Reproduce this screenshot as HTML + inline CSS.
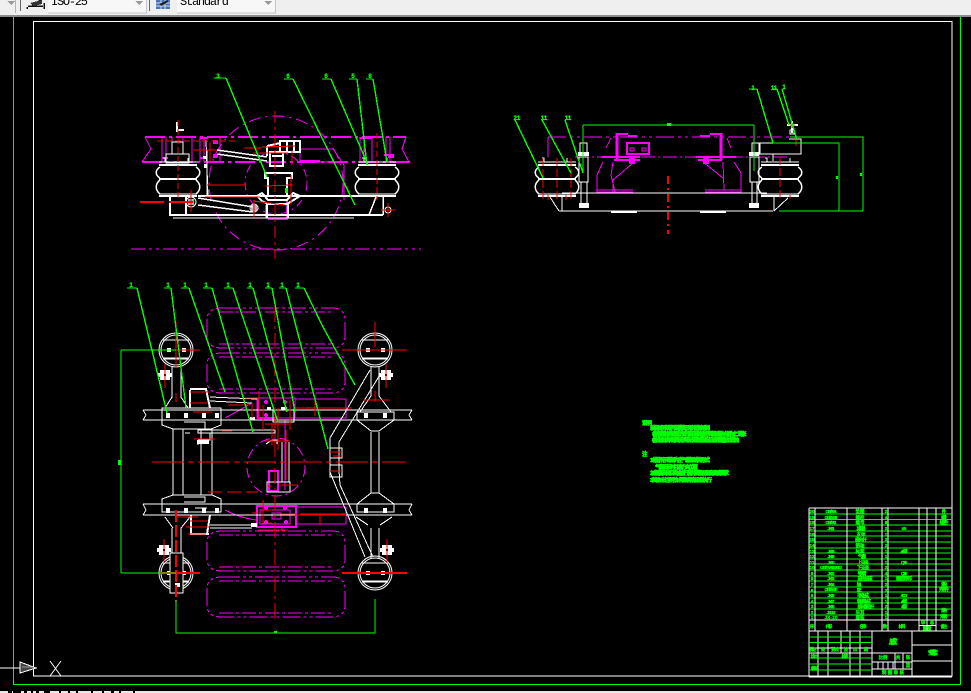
<!DOCTYPE html>
<html lang="zh">
<head>
<meta charset="utf-8">
<title>CAD</title>
<style>
html,body{margin:0;padding:0;background:#000;width:971px;height:693px;overflow:hidden}
svg{display:block;position:absolute;left:0;top:0}
.w{stroke:#fff;fill:none;stroke-width:1}
.m{stroke:#f0f;fill:none;stroke-width:1}
.r{stroke:#f00;fill:none;stroke-width:1}
.g{stroke:#0f0;fill:none;stroke-width:1}
.d{stroke:#0f0;fill:none;stroke-width:1.400}
.t{fill:#0f0;stroke:#0f0;stroke-width:.6;font-family:"Liberation Sans","Noto Sans CJK SC",sans-serif;font-size:5.5px;font-weight:bold}
.n{fill:#0f0;stroke:#0f0;stroke-width:.3;font-family:"Liberation Sans",sans-serif;font-size:6px;font-weight:bold;text-anchor:middle}
.c{fill:#0f0;stroke:#0f0;stroke-width:.3;font-family:"Liberation Sans","Noto Sans CJK SC",sans-serif;font-size:4.500px;font-weight:bold;text-anchor:middle}
.b{font-family:"Liberation Mono",monospace;font-size:12px;fill:#000}
</style>
</head>
<body>
<svg width="971" height="693" viewBox="0 0 971 693" xmlns="http://www.w3.org/2000/svg" shape-rendering="crispEdges">
<defs>
<g id="sp">
<path class="w" style="stroke-width:2" d="M-19 -14H19M-19 17H19M-19 0H19"/>
<path class="w" style="stroke-width:1.500" shape-rendering="auto" d="M-18 -12C-23 -9 -23 -4 -18 -1M18 -12C23 -9 23 -4 18 -1M-18 1C-23 5 -23 11 -18 15M18 1C23 5 23 11 18 15"/>
<path class="w" d="M-19 -17H19M-19 15H19M-15 -21H-13V-17M10 -21V-17"/>
</g>
<g id="wh">
<circle class="w" r="17" shape-rendering="auto"/>
<circle class="w" r="15" shape-rendering="auto"/>
<path class="w" d="M-13 -10H13M-13 8H13M-13 9H13"/>
<rect x="-9" y="-2" width="4" height="4" fill="#fff"/>
<rect x="6" y="-2" width="4" height="4" fill="#fff"/>
</g>
<g id="bag">
<path class="m" stroke-dasharray="18 3 3 3 3 3" d="M15 0H125Q138 0 138 12V28Q138 40 125 40H15Q0 40 0 28V12Q0 0 15 0Z"/>
<path class="m" stroke-dasharray="14 3 3 3" d="M12 4H126M12 36H126"/>
</g>
<g id="cal">
<rect x="-5" y="-5" width="10" height="10" fill="#fff"/>
<rect x="-7" y="-2" width="14" height="4" fill="#fff"/>
<rect x="-1" y="-1" width="2" height="2" fill="#000"/>
<path class="r" d="M0 -11V13"/>
</g>
</defs>

<rect width="971" height="693" fill="#000"/>

<!-- toolbar -->
<rect width="971" height="15" fill="#efefef"/>
<rect y="15" width="971" height="2" fill="#8c8c8c"/>
<path d="M7 1H15L11 5Z" fill="#999"/>
<rect x="15" y="0" width="1" height="13" fill="#b5b5b5"/>
<rect x="20" y="0" width="1" height="11" fill="#666"/>
<rect x="48" y="0" width="98" height="13" fill="#f7f7f7"/>
<path d="M146.500 0V13H48" fill="none" stroke="#c4c4c4"/>
<rect x="149" y="0" width="1" height="11" fill="#666"/>
<rect x="177" y="0" width="98" height="13" fill="#f7f7f7"/>
<path d="M275.500 0V13H177" fill="none" stroke="#c4c4c4"/>
<path d="M135 1H143L139 5ZM264 1H272L268 5Z" fill="#999"/>
<path d="M27 7V9M44 3V9M28 6H43M32 5L41 0" stroke="#111" stroke-width="1.500" fill="none"/>
<path d="M30 3L42 0V4L34 6Z" fill="#333"/>
<rect x="156" y="0" width="14" height="9" fill="#4a74b8"/>
<path d="M156 3H170M156 6H170M161 0V9M165 0V9" stroke="#c8d8f0" fill="none"/>
<path d="M159 4L168 0V2L161 6Z" fill="#222"/>
<text class="b" x="51" y="5" textLength="37">ISO-25</text>
<text class="b" x="180" y="5" textLength="49">Standard</text>

<!-- bottom strip -->
<rect y="691" width="971" height="2" fill="#e8e8e8"/>
<g fill="#000"><rect x="8" y="691" width="4" height="2"/><rect x="13" y="691" width="8" height="2"/><rect x="24" y="691" width="3" height="2"/><rect x="31" y="691" width="2" height="2"/><rect x="36" y="691" width="3" height="2"/><rect x="44" y="691" width="6" height="2"/><rect x="59" y="691" width="2" height="2"/><rect x="68" y="691" width="2" height="2"/><rect x="76" y="691" width="2" height="2"/><rect x="91" y="691" width="2" height="2"/><rect x="102" y="691" width="2" height="2"/><rect x="111" y="691" width="3" height="2"/><rect x="119" y="691" width="2" height="2"/><rect x="133" y="691" width="2" height="2"/></g>

<!-- frames -->
<path d="M13.500 17V684.500H960.500V17" fill="none" stroke="#0f0"/>
<rect x="33.500" y="21.500" width="918.500" height="654.500" fill="none" stroke="#fff"/>

<!-- UCS -->
<path d="M0 668H20" stroke="#fff" fill="none"/>
<path d="M20 662L36 668L20 673Z" fill="#444" stroke="#fff"/>
<path d="M22 667H33" stroke="#999"/>
<path d="M50 676L61 661M50 661L61 676" stroke="#fff" fill="none" shape-rendering="auto"/>

<!-- ============ top-left view ============ -->
<g>
<path class="m" stroke-dasharray="14 4 3 4 3 4" d="M131 249H421"/>
<circle class="m" cx="276" cy="183" r="67" stroke-dasharray="12 5 2 5" shape-rendering="auto"/>
<circle class="m" cx="276" cy="183" r="31" stroke-dasharray="8 4 2 4" shape-rendering="auto"/>
<path class="m" style="stroke-width:2" stroke-dasharray="20 4 3 4" d="M145 137H406M142 162H410"/>
<path class="m" d="M145 137L151 149L142 162M406 137L402 149L409 162"/>
<path class="m" d="M162 137V162M166 137V162M172 137V142M183 137V142M192 137V162M200 137V162M204 137V162M220 137V162M360 137V162M364 137V162M372 137V162M386 137V162M390 137V162M300 149H333M300 150V162M333 149L344 165L344 200M339 162H300"/>
<path class="m" style="stroke-width:2" d="M162 158H168M200 138H208M200 158H206M360 138H372M384 155H392M268 219H288M287 200V218M266 205V218M300 161H320"/>
<rect x="388" y="154" width="6" height="4" fill="#f0f"/>
<rect x="213" y="140" width="5" height="4" fill="#f0f"/>
<rect x="213" y="154" width="5" height="4" fill="#f0f"/>

<use href="#sp" x="178" y="179"/>
<use href="#sp" x="377" y="179"/>
<path class="w" d="M166 154H189V163H166ZM172 142H183V154H172Z"/>
<path class="w" style="stroke-width:2" d="M177 122V132M177 130H184M198 196H377M170 197V215M186 197V215M169 215H383"/>
<path class="w" d="M173 218H354M206 140L208 196M207 150V196"/>
<path class="w" style="stroke-width:1.500" d="M217 150L267 157M217 154L267 161M198 198L253 207M198 205L253 212M376 197L369 215M383 197V215"/>
<path class="w" style="stroke-width:2" d="M270 152H283V166H270ZM280 141H300V152H280ZM287 141V152M294 141V152M267 146L280 143M267 146V156M265 173H292V178H287V196H268V178H265ZM257 196L262 193L268 200H287L293 193L300 196L292 201L287 204H268L262 201ZM267 204V218M288 204V218M272 156H282"/>
<circle class="w" cx="254" cy="208" r="4" shape-rendering="auto"/>
<circle class="w" cx="191" cy="202" r="5" shape-rendering="auto"/>
<circle class="w" cx="388" cy="210" r="3" shape-rendering="auto"/>
<rect x="251" y="205" width="6" height="6" fill="#fff" opacity=".7"/>
<rect x="188" y="199" width="6" height="6" fill="#fff" opacity=".7"/>
<rect x="203" y="156" width="4" height="3" fill="#fff"/>
<rect x="204" y="164" width="3" height="4" fill="#fff"/>

<path class="r" stroke-dasharray="12 4 3 4" d="M275 111V259"/>
<path class="r" stroke-dasharray="6 3" d="M178 120V200M377 133V200M157 141H236"/>
<path class="r" style="stroke-width:2" stroke-dasharray="24 5" d="M140 202H198"/>
<path class="r" d="M194 150H217M207 185H245M262 147L295 146M253 153H288M265 186L293 185M253 201L285 205M205 197H260M381 210H395M388 203V217M191 190V212M254 200V217M292 150V165M291 175V205M210 142V162M244 148H261"/>
<path class="d" d="M226 78L267 177M293 79L355 205M331 79L368 165M357 79L367 165M373 79L387 162"/>
<path class="g" d="M214 78H226M284 79H293M322 79H331M349 79H357M366 79H373"/>
<rect x="285" y="188" width="3" height="5" fill="#0f0"/>
<text class="n" x="218" y="78">3</text><text class="n" x="288" y="78">6</text><text class="n" x="326" y="78">6</text><text class="n" x="353" y="78">5</text><text class="n" x="370" y="78">8</text>
</g>

<!-- ============ top-right view ============ -->
<g>
<path class="m" stroke-dasharray="18 4 3 4 3 4" d="M548 137H790"/>
<path class="m" stroke-dasharray="14 3 2 3" d="M575 157H790"/>
<path class="m" d="M548 137V157"/>
<path class="m" style="stroke-width:3" d="M617 133V160M721 133V160"/>
<path class="m" style="stroke-width:2" d="M616 134H628M710 134H722M602 157H640M696 157H736M614 160H640M698 160H722M628 136H637M700 136H710"/>
<rect class="m" x="627" y="143" width="22" height="11" style="stroke-width:2"/>
<path class="m" d="M630 148h4v3h-4zM642 148h4v3h-4z"/>
<path class="m" d="M603 162L597 175V192H615M611 138L606 148M613 162L611 175L615 192H633M633 163L613 180V192M734 162L741 173V192H705M727 138L731 148M723 162L724 190M703 162L723 178M597 190H633M705 190H741"/>
<rect x="629" y="157" width="6" height="7" fill="#f0f"/>
<rect x="703" y="157" width="6" height="7" fill="#f0f"/>

<use href="#sp" x="557" y="179"/>
<use href="#sp" x="780" y="179"/>
<path class="w" d="M559 211H773M562 193H767M562 197V211M550 197L559 211M774 197V211M774 211L788 198"/>
<path class="w" style="stroke-width:2" d="M611 212H637M700 212H726"/>
<path class="w" d="M579 157H588V182H579ZM581 182V203M587 182V203M580 143H587V155H580ZM750 157H759V182H750ZM752 182V203M757 182V203M752 143H759V155H752ZM760 143H801V154H760ZM789 139H801V143M773 154V161"/>
<rect x="578" y="152" width="11" height="4" fill="#fff"/>
<rect x="749" y="152" width="10" height="4" fill="#fff"/>
<rect x="579" y="203" width="10" height="5" fill="#fff"/>
<rect x="749" y="203" width="10" height="5" fill="#fff"/>
<path class="w" style="stroke-width:2" d="M787 125H798M792 121V133"/>
<rect x="790" y="130" width="4" height="4" fill="none" stroke="#fff"/>
<path class="r" style="stroke-width:2" stroke-dasharray="8 4 2 4" d="M668 176V234"/>
<path class="r" stroke-dasharray="8 3" d="M543 158V202M557 158V202M571 158V202M780 157V200"/>
<path class="r" d="M796 140V146M790 125H795M792 122V128M548 195V200M566 195V200M790 195V199"/>
<path class="g" d="M583 125H754M583 125V173M754 125V171M790 137H863V211M773 143H839V211M779 211H863M749 89H757M772 89H777"/>
<path class="d" d="M515 120L543 178M542 120L571 173M565 120L583 173M757 89L773 143M777 89L789 125M782 89L797 140"/>
<rect x="667" y="123" width="4" height="3" fill="#0f0"/>
<rect x="860" y="173" width="2" height="3" fill="#0f0"/>
<rect x="836" y="176" width="2" height="3" fill="#0f0"/>
<text class="n" x="517" y="120">21</text><text class="n" x="544" y="120">11</text><text class="n" x="568" y="120">11</text><text class="n" x="753" y="90">1</text><text class="n" x="774" y="90">11</text><text class="n" x="784" y="89">1</text>
</g>

<!-- ============ plan view ============ -->
<g>
<use href="#bag" x="207" y="308"/>
<use href="#bag" x="207" y="353"/>
<use href="#bag" x="207" y="531"/>
<use href="#bag" x="207" y="577"/>
<circle class="m" cx="276" cy="467" r="29" stroke-dasharray="10 4 2 4" shape-rendering="auto"/>
<path class="m" d="M257 398H295V418H257ZM295 399H346V418H295ZM225 418Q240 410 252 403M225 510Q240 518 256 520"/>
<path class="m" style="stroke-width:2" d="M257 506H296V527H257ZM269 471H278V491H269Z"/>
<path class="m" d="M296 507H346V524H296ZM260 510H290V524H260ZM272 513H281V519H272ZM258 527H282V531M285 420V490"/>
<path class="m" style="stroke-width:2" d="M258 398V418H275"/>

<path class="w" d="M143 410H412M143 420H412M143 504H412M143 515H412M143 410L146 415L143 420M412 410L409 415L412 420M143 504L146 510L143 515M412 504L409 510L412 515"/>
<path class="w" d="M162 408H221V425L211 429H173L162 425ZM173 429V495M183 429V495M201 429V495M212 429V495M162 499L173 495H212L221 499V512H162Z"/>
<path class="w" d="M357 412H394V420L379 431H371L357 420ZM371 432V493M379 432V493M357 512V504L371 493H379L394 504V512Z"/>
<path class="w" d="M172 367V398M181 367V398M165 408L172 397M188 408L181 397M371 367V396M379 367V396M360 412L371 396M391 412L379 396"/>
<path class="w" d="M172 528V553M181 528V553M173 528L165 517M181 528L190 517M371 528V558M379 528V558M368 525L356 517M380 525L392 517"/>
<use href="#wh" x="176" y="350"/>
<use href="#wh" x="375" y="350"/>
<use href="#wh" x="176" y="573"/>
<use href="#wh" x="375" y="573"/>
<rect class="w" x="170" y="553" width="13" height="40" style="fill:#000"/>
<rect x="175" y="583" width="5" height="4" fill="#fff"/>

<use href="#cal" x="165" y="375"/>
<use href="#cal" x="386" y="375"/>
<use href="#cal" x="164" y="550"/>
<use href="#cal" x="387" y="550"/>

<path class="w" style="stroke-width:2" d="M190 390V408M190 389H206L210 408M190 534H207L210 515M191 515V534"/>
<path class="w" d="M210 397L257 399M210 401L252 403M198 430H275V433H198ZM198 440H210V433M198 441V445M210 525H257M210 528H252M184 422H205V429H184M184 497H205V502H184M294 409V422H273V409M266 444L272 440H277V444M267 482H290V492H267ZM282 442V482M289 442V482"/>
<path class="w" d="M370 370L330 438V472L365 557M381 373L339 442V470L340 485L373 557"/>
<path class="w" d="M330 448H342V458H330ZM330 465H342V477H330ZM195 508H207M185 433H190"/>
<rect x="267" y="407" width="4" height="3" fill="#fff"/><rect x="281" y="407" width="6" height="3" fill="#fff"/>
<rect x="250" y="417" width="5" height="3" fill="#fff"/><rect x="197" y="440" width="12" height="4" fill="#fff"/>
<rect x="251" y="523" width="6" height="4" fill="#fff"/><rect x="193" y="533" width="16" height="2" fill="#fff"/>
<g fill="#fff"><rect x="166" y="413" width="4" height="5"/><rect x="184" y="413" width="4" height="5"/><rect x="202" y="413" width="4" height="5"/><rect x="215" y="413" width="4" height="5"/><rect x="364" y="413" width="4" height="5"/><rect x="383" y="413" width="4" height="5"/><rect x="166" y="508" width="4" height="5"/><rect x="184" y="508" width="4" height="5"/><rect x="202" y="508" width="4" height="5"/><rect x="215" y="508" width="4" height="5"/><rect x="364" y="508" width="4" height="5"/><rect x="383" y="508" width="4" height="5"/></g>

<path class="r" stroke-dasharray="32 4 6 4" d="M152 462H406"/>
<path class="r" stroke-dasharray="16 4 3 4" d="M275 306V620"/>
<path class="r" d="M158 350H200M342 350H407M176 322V368M375 322V347M375 391V402M176 393V402M364 400H390"/>
<path class="r" style="stroke-width:2" d="M160 573H200M342 573H407"/>
<path class="r" style="stroke-width:2" stroke-dasharray="12 3" d="M176 510V602"/>
<path class="r" d="M190 403H208M190 392H210M193 412H212M222 431H232M194 439H215M228 405H250M252 403V418M245 398H260M259 391V419M295 408H352M315 400V416M265 424H289M265 441H290M300 514H345M190 521H208M186 527H210M188 534H206M175 517H198M295 515H346M320 514V525M252 513H258M263 510H272M280 514H295M258 530H288M262 523H272M268 486H272M280 485H298M333 456H342M330 452H342M330 471H342M263 405V430M278 408V450M290 400V430M286 430V480M272 424V445M263 500V522"/>
<path class="r" stroke-dasharray="14 5" d="M208 492H258"/>
<g fill="#f0f"><circle cx="266" cy="402" r="2"/><circle cx="285" cy="402" r="2"/><circle cx="266" cy="415" r="2"/><circle cx="266" cy="508" r="2"/><circle cx="285" cy="508" r="2"/><circle cx="266" cy="522" r="2"/><circle cx="286" cy="522" r="2"/></g>

<path class="g" d="M121 350H176M121 350V573M121 573H176M176 600V633H375V599M127 288H137M164 288H171M181 288H189M203 288H212M224 288H233M247 288H253M265 288H272M279 288H286M295 288H304"/>
<rect x="118" y="460" width="3" height="5" fill="#0f0"/>
<rect x="274" y="631" width="3" height="2" fill="#0f0"/>
<path class="d" d="M137 288L167 413M171 288L186 408M189 288L225 392M212 288L253 432M233 288L278 422M253 288L287 412M272 288L295 412M286 288L328 449M304 288L323 327L355 385"/>
<text class="n" x="131" y="287">1</text><text class="n" x="168" y="287">1</text><text class="n" x="185" y="287">1</text><text class="n" x="206" y="287">1</text><text class="n" x="228" y="287">1</text><text class="n" x="250" y="287">1</text><text class="n" x="268" y="287">1</text><text class="n" x="282" y="287">1</text><text class="n" x="298" y="287">1</text>
</g>

<!-- notes -->
<text class="t" x="642" y="425" textLength="10">说明</text>
<text class="t" x="650" y="430" textLength="60">1.装配前所有零件须清洗干净并去除毛刺</text>
<text class="t" x="652" y="436" textLength="94">2.各连接螺栓应按规定力矩拧紧后涂防松胶不得松动最大允差为士二毫米</text>
<text class="t" x="652" y="442" textLength="87">3.各铰接处应转动灵活不得有卡滞现象 装配后涂润滑脂防止锈蚀</text>
<text class="t" x="642" y="456" textLength="6">注</text>
<text class="t" x="650" y="462" textLength="60">1.本图所示悬架 为空气悬架结构形式</text>
<text class="t" x="655" y="469" textLength="43">气囊安装时注意方向位置</text>
<text class="t" x="650" y="475" textLength="79">2.减振器安装后应检查行程并调整至规定高度要求</text>
<text class="t" x="650" y="482" textLength="62">3.其余未注明技术要求按标准执行</text>

<!-- title block -->
<g>
<path class="g" d="M809 514H952M809 519.500H952M809 525H952M809 531H952M809 536H952M809 542H952M809 548H952M809 553H952M809 559H952M809 564H952M809 570H952M809 576H952M809 581H952M809 587H952M809 592H952M809 598H952M809 603H952M809 609H952M809 615H952"/>
<path class="w" d="M809 508H952M809 620H952M809 631H952M809 648H872M809 653H872M809 677H952M872 653H912M872 662H912M872 669H912M912 645H952M912 661H952M919 625.500H936"/>
<path class="w" d="M809 508V677M815 508V631M847 508V631M882 508V631M888 508V631M919 508V631M927 508V631M936 508V631M872 631V677M912 631V677M818 631V677M828 631V677M841 631V653M850 631V677M860 631V677"/>
<path class="w" d="M895 653V669M903 653V669M878 662V669M883 662V669M888 662V669M893 662V669"/>
<path class="g" d="M809 637H872M809 642.500H872M809 658H872M809 664H872M809 670H872"/>
<g>
<text class="c" x="812" y="513">20</text><text class="c" x="812" y="519">19</text><text class="c" x="812" y="524">18</text><text class="c" x="812" y="530">17</text><text class="c" x="812" y="536">16</text><text class="c" x="812" y="541">15</text><text class="c" x="812" y="547">14</text><text class="c" x="812" y="553">13</text><text class="c" x="812" y="558">12</text><text class="c" x="812" y="564">11</text><text class="c" x="812" y="569">10</text><text class="c" x="812" y="575">9</text><text class="c" x="812" y="580">8</text><text class="c" x="812" y="586">7</text><text class="c" x="812" y="592">6</text><text class="c" x="812" y="597">5</text><text class="c" x="812" y="603">4</text><text class="c" x="812" y="608">3</text><text class="c" x="812" y="614">2</text><text class="c" x="812" y="619">1</text>
<text class="c" x="831" y="513" textLength="11">GB/T94</text><text class="c" x="831" y="519" textLength="13">GB/T5783</text><text class="c" x="831" y="524" textLength="11">GB/T41</text><text class="c" x="831" y="530" textLength="7">JX-01</text>
<text class="c" x="831" y="553" textLength="7">JX-08</text><text class="c" x="831" y="558" textLength="7">JX-09</text><text class="c" x="831" y="564" textLength="7">JX-10</text><text class="c" x="831" y="569" textLength="22">GB/T5782-2000</text><text class="c" x="831" y="575" textLength="7">JX-12</text><text class="c" x="831" y="580" textLength="7">JX-13</text><text class="c" x="831" y="586" textLength="7">JX-14</text><text class="c" x="831" y="591" textLength="13">GB/T5780</text><text class="c" x="831" y="597" textLength="7">JX-16</text><text class="c" x="831" y="603" textLength="7">JX-17</text><text class="c" x="831" y="608" textLength="7">JX-18</text><text class="c" x="831" y="614" textLength="9">JX-19</text><text class="c" x="831" y="619" textLength="13">JX-20</text>
<text class="c" x="860" y="513">垫圈</text><text class="c" x="860" y="519">螺栓</text><text class="c" x="860" y="524">螺母</text><text class="c" x="861" y="530" textLength="9">减振器</text><text class="c" x="861" y="536">支架</text><text class="c" x="861" y="541" textLength="12">横向杆</text><text class="c" x="860" y="547">销轴</text><text class="c" x="860" y="553">衬套</text><text class="c" x="862" y="558" textLength="8">气囊</text><text class="c" x="863" y="564" textLength="11">上支座</text><text class="c" x="863" y="569" textLength="12">下支座</text><text class="c" x="862" y="575" textLength="9">导向臂</text><text class="c" x="865" y="580" textLength="15">前桥总成</text><text class="c" x="859" y="586">轴</text><text class="c" x="859" y="592">梁</text><text class="c" x="863" y="597" textLength="12">车轮总成</text><text class="c" x="864" y="603" textLength="14">制动器总成</text><text class="c" x="866" y="608" textLength="17">横向稳定杆</text><text class="c" x="860" y="614">吊耳</text><text class="c" x="860" y="619">底板</text>
<text class="c" x="886" y="513">2</text><text class="c" x="886" y="519">4</text><text class="c" x="886" y="524">8</text><text class="c" x="886" y="530">2</text><text class="c" x="886" y="536">1</text><text class="c" x="886" y="541">2</text><text class="c" x="886" y="547">2</text><text class="c" x="886" y="553">1</text><text class="c" x="886" y="558">1</text><text class="c" x="886" y="564">1</text><text class="c" x="886" y="569">2</text><text class="c" x="886" y="575">4</text><text class="c" x="886" y="580">1</text><text class="c" x="886" y="586">2</text><text class="c" x="886" y="592">2</text><text class="c" x="886" y="597">1</text><text class="c" x="886" y="603">1</text><text class="c" x="886" y="608">2</text><text class="c" x="886" y="614">1</text><text class="c" x="886" y="619">1</text>
<text class="c" x="904" y="530" textLength="5">45</text><text class="c" x="904" y="553" textLength="7">45钢</text><text class="c" x="904" y="564" textLength="6">Q235</text><text class="c" x="904" y="575" textLength="6">Q235</text><text class="c" x="904" y="580" textLength="16">橡胶帘布</text><text class="c" x="904" y="597" textLength="7">40Cr</text><text class="c" x="904" y="603" textLength="6">45钢</text><text class="c" x="904" y="608" textLength="6">45钢</text>
<text class="c" x="944" y="513">件</text><text class="c" x="944" y="519" textLength="6">标准</text><text class="c" x="944" y="524" textLength="9">标准件</text><text class="c" x="944" y="586" textLength="6">外购</text><text class="c" x="944" y="591" textLength="10">外购件</text><text class="c" x="944" y="612" textLength="6">外购</text><text class="c" x="944" y="618" textLength="8">外购件</text>
<text class="c" x="812" y="628">序</text><text class="c" x="829" y="628" textLength="7">代 号</text><text class="c" x="863" y="628" textLength="7">名 称</text><text class="c" x="885" y="628">数</text><text class="c" x="902" y="628" textLength="7">材 料</text><text class="c" x="923" y="624">单</text><text class="c" x="932" y="624">总</text><text class="c" x="927" y="630">重量</text><text class="c" x="944" y="628" textLength="7">备 注</text>
<text class="c" x="893" y="644" textLength="9" style="font-size:7px">总成</text>
<text class="c" x="933" y="655" textLength="10" style="font-size:6px">空气悬架</text>
<text class="c" x="883" y="659" textLength="9">比例</text><text class="c" x="898" y="659">共</text><text class="c" x="908" y="659">张</text>
<text class="c" x="908" y="667">第</text>
<text class="c" x="893" y="674" textLength="22">制 图 审 核</text>
<text class="c" x="813" y="651" textLength="7">标记</text><text class="c" x="823" y="651">处</text><text class="c" x="835" y="651" textLength="8">更改</text><text class="c" x="846" y="651">签</text><text class="c" x="855" y="651">日</text><text class="c" x="866" y="651">期</text>
<text class="c" x="814" y="658" textLength="7">设计</text><text class="c" x="845" y="658" textLength="7">标准</text><text class="c" x="814" y="670" textLength="7">审核</text>
</g>
</g>
</svg>
</body>
</html>
